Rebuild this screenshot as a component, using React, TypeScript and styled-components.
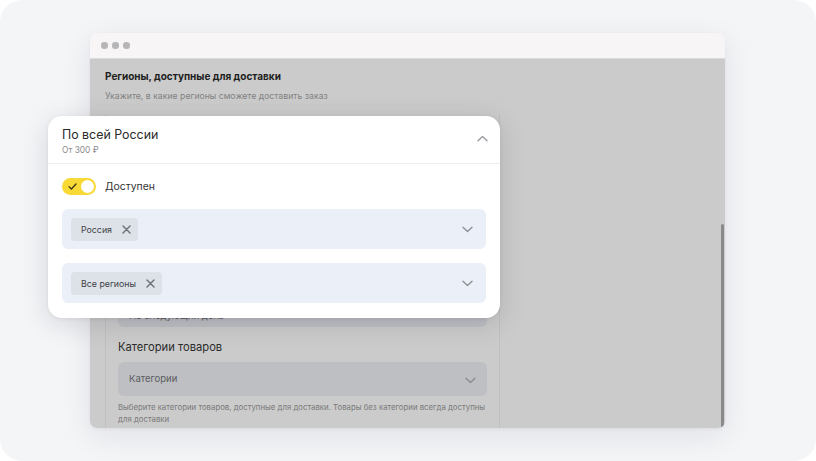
import styled, { createGlobalStyle } from "styled-components";

const GlobalStyle = createGlobalStyle`
  html, body {
    margin: 0;
    padding: 0;
    background: #ffffff;
  }
  body {
    font-family: Inter, "Noto Sans", "Liberation Sans", sans-serif;
    -webkit-font-smoothing: antialiased;
  }
`;

const ChevronDown = ({ color = "#8e9196" }: { color?: string }) => (
  <svg width="11" height="7" viewBox="0 0 11 7" fill="none">
    <path d="M1 1.2L5.5 5.5L10 1.2" stroke={color} strokeWidth="1.4" strokeLinecap="round" strokeLinejoin="round" />
  </svg>
);

const ChevronUp = () => (
  <svg width="11" height="7" viewBox="0 0 11 7" fill="none">
    <path d="M1 5.8L5.5 1.5L10 5.8" stroke="#9a9ca0" strokeWidth="1.4" strokeLinecap="round" strokeLinejoin="round" />
  </svg>
);

const CrossIcon = () => (
  <svg width="9" height="9" viewBox="0 0 9 9" fill="none">
    <path d="M1 1L8 8M8 1L1 8" stroke="#6b6e73" strokeWidth="1.4" strokeLinecap="round" />
  </svg>
);

const CheckIcon = () => (
  <svg width="9" height="7" viewBox="0 0 9 7" fill="none">
    <path d="M1 3.6L3.4 6L8 1" stroke="#3a3418" strokeWidth="1.3" strokeLinecap="round" strokeLinejoin="round" />
  </svg>
);

export default function App() {
  return (
    <>
      <GlobalStyle />
      <Frame>
        <Window>
          <TitleBar>
            <Dot />
            <Dot />
            <Dot />
          </TitleBar>
          <WindowBody>
            <PageTitle>Регионы, доступные для доставки</PageTitle>
            <PageHint>Укажите, в какие регионы сможете доставить заказ</PageHint>
            <Panel>
              <DimSelect $first>На следующий день</DimSelect>
              <FieldLabel>Категории товаров</FieldLabel>
              <DimSelect>
                Категории
                <ChevronDown color="#8a8c90" />
              </DimSelect>
              <HelpText>
                Выберите категории товаров, доступные для доставки. Товары без категории всегда доступны
                для доставки
              </HelpText>
            </Panel>
            <Scrollbar />
          </WindowBody>
        </Window>

        <Popup>
          <PopupHeader>
            <div>
              <PopupTitle>По всей России</PopupTitle>
              <PopupSub>От 300 ₽</PopupSub>
            </div>
            <ChevronUp />
          </PopupHeader>
          <PopupBody>
            <ToggleRow>
              <Toggle>
                <CheckIcon />
                <Knob />
              </Toggle>
              <ToggleLabel>Доступен</ToggleLabel>
            </ToggleRow>
            <MultiSelect>
              <Chip>
                Россия
                <CrossIcon />
              </Chip>
              <ChevronDown />
            </MultiSelect>
            <MultiSelect>
              <Chip>
                Все регионы
                <CrossIcon />
              </Chip>
              <ChevronDown />
            </MultiSelect>
          </PopupBody>
        </Popup>
      </Frame>
    </>
  );
}

const Frame = styled.div`
  position: relative;
  width: 816px;
  height: 461px;
  box-sizing: border-box;
  padding: 33px 0 0 90px;
  background: #f4f5f7;
  border-radius: 22px;
  overflow: hidden;
`;

const Window = styled.div`
  width: 635px;
  height: 395px;
  display: flex;
  flex-direction: column;
  border-radius: 7px;
  overflow: hidden;
  box-shadow: 0 8px 30px rgba(20, 24, 40, 0.09), 0 1px 3px rgba(20, 24, 40, 0.05);
`;

const TitleBar = styled.div`
  height: 25px;
  flex-shrink: 0;
  display: flex;
  align-items: center;
  gap: 4.5px;
  padding-left: 11px;
  background: #f7f5f6;
  border-bottom: 1px solid #dcdcdc;
`;

const Dot = styled.span`
  width: 6.5px;
  height: 6.5px;
  border-radius: 50%;
  background: #b6b6b8;
`;

const WindowBody = styled.div`
  position: relative;
  flex: 1;
  background: #cbcbcb;
  padding: 10px 0 0 15px;
  overflow: hidden;
`;

const PageTitle = styled.div`
  font-size: 10px;
  line-height: 14px;
  font-weight: 700;
  color: #1e1e1e;
`;

const PageHint = styled.div`
  margin-top: 7px;
  font-size: 8.7px;
  line-height: 12px;
  color: #828282;
`;

const Panel = styled.div`
  margin-top: 12px;
  width: 395px;
  height: 330px;
  box-sizing: border-box;
  padding: 0 12px;
  border-left: 1px solid #c0c0c0;
  border-right: 1px solid #c0c0c0;
  display: flex;
  flex-direction: column;
`;

const DimSelect = styled.div<{ $first?: boolean }>`
  margin-top: ${(p) => (p.$first ? "181px" : "7px")};
  height: ${(p) => (p.$first ? "32px" : "34px")};
  box-sizing: border-box;
  padding: ${(p) => (p.$first ? "15px 11px 0" : "0 11px")};
  display: flex;
  align-items: ${(p) => (p.$first ? "flex-start" : "center")};
  justify-content: space-between;
  background: #bdbfc3;
  border-radius: 6px;
  font-size: 9.5px;
  line-height: 12px;
  color: #5b5c5f;
  svg {
    margin-top: 2px;
  }
`;

const FieldLabel = styled.div`
  margin-top: 12px;
  font-size: 11.2px;
  line-height: 16px;
  color: #2c2c2c;
`;

const HelpText = styled.div`
  margin-top: 5px;
  font-size: 7.8px;
  line-height: 12px;
  color: #7a7a7a;
`;

const Scrollbar = styled.div`
  position: absolute;
  right: 1px;
  top: 165px;
  bottom: 0;
  width: 3px;
  border-radius: 2px;
  background: #8a8a8a;
`;

const Popup = styled.div`
  position: absolute;
  left: 48px;
  top: 116px;
  width: 452px;
  height: 202px;
  background: #ffffff;
  border-radius: 14px;
  box-shadow: 0 6px 28px rgba(20, 24, 40, 0.14), 0 1px 4px rgba(20, 24, 40, 0.06);
  display: flex;
  flex-direction: column;
`;

const PopupHeader = styled.div`
  height: 48px;
  box-sizing: border-box;
  padding: 10px 12px 0 14px;
  display: flex;
  justify-content: space-between;
  border-bottom: 1px solid #eeeeee;
  svg {
    margin-top: 9px;
  }
`;

const PopupTitle = styled.div`
  font-size: 12.4px;
  line-height: 17px;
  color: #2a2a2a;
`;

const PopupSub = styled.div`
  margin-top: 1px;
  font-size: 8.4px;
  line-height: 12px;
  color: #8c8c8c;
`;

const PopupBody = styled.div`
  padding: 14px 14px 15px;
  display: flex;
  flex-direction: column;
  gap: 14px;
`;

const ToggleRow = styled.div`
  display: flex;
  align-items: center;
  gap: 9px;
`;

const Toggle = styled.div`
  width: 34px;
  height: 17px;
  box-sizing: border-box;
  padding: 0 2px 0 6px;
  border-radius: 9px;
  background: #f8d936;
  display: flex;
  align-items: center;
  justify-content: space-between;
`;

const Knob = styled.span`
  width: 13px;
  height: 13px;
  border-radius: 50%;
  background: #ffffff;
`;

const ToggleLabel = styled.span`
  font-size: 10.4px;
  color: #333333;
`;

const MultiSelect = styled.div`
  height: 40px;
  box-sizing: border-box;
  padding: 0 13px 0 9px;
  border-radius: 6px;
  background: #ebeff7;
  display: flex;
  align-items: center;
  justify-content: space-between;
`;

const Chip = styled.div`
  height: 23px;
  box-sizing: border-box;
  padding: 0 7px 0 10px;
  border-radius: 4px;
  background: #dde1e8;
  display: flex;
  align-items: center;
  gap: 10px;
  font-size: 8.8px;
  color: #404246;
`;
